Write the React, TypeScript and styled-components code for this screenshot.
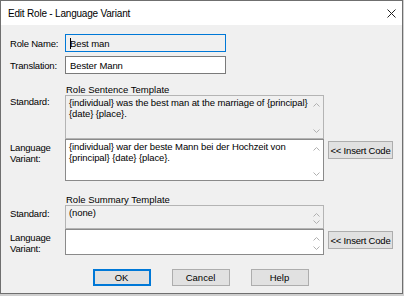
import React from 'react';
import styled, { createGlobalStyle } from 'styled-components';

const GlobalStyle = createGlobalStyle`
  html, body {
    margin: 0;
    padding: 0;
    background: #cfcfcf;
  }
  body {
    font-family: "Liberation Sans", Arial, sans-serif;
    color: #000;
  }
`;

const Window = styled.div`
  width: 403px;
  height: 294px;
  box-sizing: border-box;
  border: 1px solid #6f6f6f;
  background: #f0f0f0;
  display: flex;
  flex-direction: column;
  overflow: hidden;
`;

const TitleBar = styled.div`
  height: 24px;
  flex: none;
  background: #fff;
  display: flex;
  align-items: center;
  justify-content: space-between;
  padding: 0 6px 0 7px;
`;

const Title = styled.span`
  font-size: 10px;
  letter-spacing: -0.2px;
`;

const Body = styled.div`
  padding: 9px 9px 0 9px;
  display: flex;
  flex-direction: column;
  font-size: 9.5px;
  line-height: 11px;
`;

const FieldRow = styled.div`
  display: flex;
  align-items: center;
  height: 18px;
  & + & {
    margin-top: 4px;
  }
`;

const Label = styled.div<{ $top?: number }>`
  width: 55px;
  flex: none;
  padding-top: ${({ $top }) => $top ?? 0}px;
  box-sizing: border-box;
  letter-spacing: -0.2px;
`;

const Input = styled.div<{ $focused?: boolean }>`
  width: 161px;
  height: 18px;
  box-sizing: border-box;
  border: 1px solid ${({ $focused }) => ($focused ? '#0078d7' : '#7a7a7a')};
  background: ${({ $focused }) => ($focused ? '#f0f0f0' : '#fff')};
  padding: 0 4px;
  display: flex;
  align-items: center;
  letter-spacing: -0.1px;
`;

const Caret = styled.span`
  display: inline-block;
  width: 1px;
  height: 11px;
  vertical-align: -2px;
  background: #000;
  margin-right: -1px;
  position: relative;
  z-index: 1;
`;

const SectionHeading = styled.div<{ $gap: number }>`
  margin-top: ${({ $gap }) => $gap}px;
  padding-left: 56px;
  height: 11px;
`;

const TemplateRow = styled.div`
  display: flex;
  align-items: flex-start;
`;

const TextBox = styled.div<{ $h: number; $readOnly?: boolean }>`
  width: 259px;
  height: ${({ $h }) => $h}px;
  box-sizing: border-box;
  border: 1px solid ${({ $readOnly }) => ($readOnly ? '#b4b4b4' : '#8a8a8a')};
  background: ${({ $readOnly }) => ($readOnly ? '#f0f0f0' : '#fff')};
  display: flex;
`;

const BoxText = styled.div`
  flex: 1;
  padding: 1px 0 1px 3px;
  letter-spacing: -0.1px;
`;

const ScrollColumn = styled.div<{ $bottom: number }>`
  width: 12px;
  flex: none;
  display: flex;
  flex-direction: column;
  justify-content: space-between;
  align-items: center;
  padding: 7px 2px ${({ $bottom }) => $bottom}px 0;
  box-sizing: border-box;
`;

const InsertButton = styled.button`
  margin: 2px 0 0 4px;
  width: 65px;
  height: 18px;
  padding: 0;
  border: 1px solid #adadad;
  background: #e1e1e1;
  font-family: inherit;
  font-size: 9.5px;
  letter-spacing: -0.2px;
  color: #000;
`;

const ButtonRow = styled.div`
  margin-top: 14px;
  display: flex;
  justify-content: center;
  gap: 21px;
  padding-right: 2px;
`;

const DialogButton = styled.button<{ $primary?: boolean }>`
  width: 58px;
  height: 17px;
  padding: 0;
  box-sizing: border-box;
  border: 1px solid ${({ $primary }) => ($primary ? '#0078d7' : '#adadad')};
  box-shadow: ${({ $primary }) => ($primary ? 'inset 0 0 0 1px #0078d7' : 'none')};
  background: #e1e1e1;
  font-family: inherit;
  font-size: 9.5px;
  color: #000;
`;

const Chevron = ({ up }: { up?: boolean }) => (
  <svg width="7" height="4" viewBox="0 0 7 4">
    <polyline
      points={up ? '0.5,3.5 3.5,0.5 6.5,3.5' : '0.5,0.5 3.5,3.5 6.5,0.5'}
      fill="none"
      stroke="#b0b0b0"
      strokeWidth="1"
    />
  </svg>
);

const CloseIcon = () => (
  <svg width="9" height="9" viewBox="0 0 9 9">
    <path d="M0.5 0.5 L8.5 8.5 M8.5 0.5 L0.5 8.5" stroke="#222" strokeWidth="1" />
  </svg>
);

interface TemplateProps {
  height: number;
  readOnly?: boolean;
  bottom: number;
  children?: React.ReactNode;
}

const Template = ({ height, readOnly, bottom, children }: TemplateProps) => (
  <TextBox $h={height} $readOnly={readOnly}>
    <BoxText>{children}</BoxText>
    <ScrollColumn $bottom={bottom}>
      <Chevron up />
      <Chevron />
    </ScrollColumn>
  </TextBox>
);

const App = () => {
  return (
    <>
      <GlobalStyle />
      <Window>
        <TitleBar>
          <Title>Edit Role - Language Variant</Title>
          <CloseIcon />
        </TitleBar>
        <Body>
          <FieldRow>
            <Label>Role Name:</Label>
            <Input $focused>
              <span>
                <Caret />
                Best man
              </span>
            </Input>
          </FieldRow>
          <FieldRow>
            <Label>Translation:</Label>
            <Input>Bester Mann</Input>
          </FieldRow>

          <SectionHeading $gap={10}>Role Sentence Template</SectionHeading>
          <TemplateRow>
            <Label $top={1}>Standard:</Label>
            <Template height={44} readOnly bottom={5}>
              {'{individual} was the best man at the marriage of {principal} {date} {place}.'}
            </Template>
          </TemplateRow>
          <TemplateRow>
            <Label $top={3}>
              Language
              <br />
              Variant:
            </Label>
            <Template height={42} bottom={4}>
              {'{individual} war der beste Mann bei der Hochzeit von {principal} {date} {place}.'}
            </Template>
            <InsertButton>&lt;&lt; Insert Code</InsertButton>
          </TemplateRow>

          <SectionHeading $gap={13}>Role Summary Template</SectionHeading>
          <TemplateRow>
            <Label $top={3}>Standard:</Label>
            <Template height={24} readOnly bottom={4}>
              (none)
            </Template>
          </TemplateRow>
          <TemplateRow>
            <Label $top={3}>
              Language
              <br />
              Variant:
            </Label>
            <Template height={26} bottom={4} />
            <InsertButton>&lt;&lt; Insert Code</InsertButton>
          </TemplateRow>

          <ButtonRow>
            <DialogButton $primary>OK</DialogButton>
            <DialogButton>Cancel</DialogButton>
            <DialogButton>Help</DialogButton>
          </ButtonRow>
        </Body>
      </Window>
    </>
  );
};

export default App;
